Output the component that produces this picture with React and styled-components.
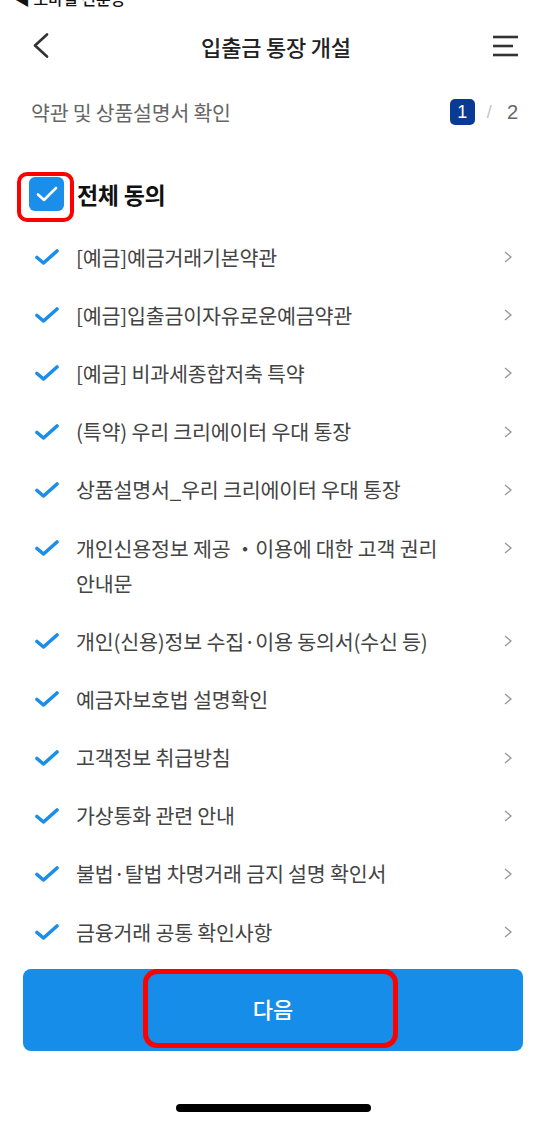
import styled, { createGlobalStyle } from "styled-components"

const GlobalStyle = createGlobalStyle`
  html, body {
    margin: 0;
    padding: 0;
    background: #ffffff;
  }
  body {
    font-family: "Noto Sans CJK KR", "Noto Sans", sans-serif;
    -webkit-font-smoothing: antialiased;
  }
  * { box-sizing: border-box; }
`

const Page = styled.div`
    width: 547px;
    min-height: 1125px;
    display: flex;
    flex-direction: column;
    background: #ffffff;
`

const StatusBar = styled.div`
    height: 7px;
    overflow: hidden;
    padding-left: 14px;
`

const StatusLabel = styled.div`
    margin-top: -11px;
    font-size: 16px;
    line-height: 18px;
    font-weight: 500;
    color: #111;
`

const Header = styled.header`
    height: 77px;
    display: grid;
    grid-template-columns: 1fr auto 1fr;
    align-items: center;
    padding: 0 28px 0 33px;
`

const Title = styled.h1`
    margin: 0;
    font-size: 22px;
    font-weight: 500;
    color: #222;
    letter-spacing: -0.2px;
`

const IconButton = styled.button`
    border: none;
    background: none;
    padding: 0;
    display: flex;
    justify-self: ${props => props.end ? "end" : "start"};
    cursor: pointer;
`

const StepRow = styled.div`
    height: 56px;
    display: flex;
    align-items: center;
    justify-content: space-between;
    padding: 0 29px 0 31px;
`

const StepTitle = styled.p`
    margin: 0;
    font-size: 20.5px;
    color: #666;
    letter-spacing: -0.2px;
`

const Steps = styled.div`
    display: flex;
    align-items: center;
    font-size: 19px;
    color: #666;
`

const StepBadge = styled.span`
    width: 25px;
    height: 26px;
    border-radius: 5px;
    background: #0b3a94;
    color: #fff;
    display: flex;
    align-items: center;
    justify-content: center;
    font-size: 18px;
    font-family: "Liberation Sans", "Noto Sans", sans-serif;
`

const Slash = styled.span`
    margin: 0 15px 0 12px;
    color: #c4c4c4;
    font-family: "Liberation Sans", "Noto Sans", sans-serif;
    font-size: 18px;
`

const StepTotal = styled.span`
    font-family: "Liberation Sans", "Noto Sans", sans-serif;
    font-size: 20px;
    color: #666;
`

const AllAgree = styled.label`
    margin-top: 37px;
    height: 34px;
    display: flex;
    align-items: center;
    gap: 13px;
    padding-left: 29px;
`

const CheckBox = styled.span`
    position: relative;
    width: 35px;
    height: 34px;
    border-radius: 6px;
    background: #1a8ee9;
    display: flex;
    align-items: center;
    justify-content: center;
`

const Highlight = styled.span`
    position: absolute;
    top: ${props => props.top}px;
    left: ${props => props.left}px;
    width: ${props => props.w}px;
    height: ${props => props.h}px;
    border: ${props => props.thick}px solid #ff0000;
    border-radius: ${props => props.radius}px;
    pointer-events: none;
`

const AllAgreeText = styled.span`
    font-size: 23px;
    font-weight: 700;
    color: #111;
    letter-spacing: -0.3px;
`

const List = styled.ul`
    list-style: none;
    margin: 17px 0 0;
    padding: 0;
`

const Item = styled.li`
    display: flex;
    align-items: flex-start;
    padding: 11.6px 35px 11.6px 35px;
`

const CheckCell = styled.span`
    width: 41px;
    height: 35px;
    display: flex;
    align-items: center;
    flex-shrink: 0;
`

const ItemText = styled.span`
    flex: 1;
    font-size: 20.6px;
    line-height: 35px;
    color: #444;
    letter-spacing: -0.2px;
`

const ArrowCell = styled.span`
    height: 35px;
    display: flex;
    align-items: center;
    flex-shrink: 0;
`

const Footer = styled.div`
    padding: 8px 24px 0 23px;
`

const NextButton = styled.button`
    position: relative;
    width: 100%;
    height: 82px;
    border: none;
    border-radius: 8px;
    background: #168de9;
    color: #fff;
    font-family: "Noto Sans CJK KR", "Noto Sans", sans-serif;
    font-size: 22px;
    font-weight: 500;
    padding: 0 0 4px;
    cursor: pointer;
`

const HomeArea = styled.div`
    flex: 1;
    display: flex;
    justify-content: center;
    padding-top: 53px;
`

const HomeBar = styled.span`
    width: 195px;
    height: 8px;
    border-radius: 4px;
    background: #000;
`

const items = [
    "[예금]예금거래기본약관",
    "[예금]입출금이자유로운예금약관",
    "[예금] 비과세종합저축 특약",
    "(특약) 우리 크리에이터 우대 통장",
    "상품설명서_우리 크리에이터 우대 통장",
    ["개인신용정보 제공 ・이용에 대한 고객 권리", "안내문"],
    "개인(신용)정보 수집·이용 동의서(수신 등)",
    "예금자보호법 설명확인",
    "고객정보 취급방침",
    "가상통화 관련 안내",
    "불법·탈법 차명거래 금지 설명 확인서",
    "금융거래 공통 확인사항",
]

const BackIcon = () => (
    <svg width="16" height="25" viewBox="0 0 16 25">
        <polyline points="14,1.5 2,12.5 14,23.5" fill="none" stroke="#333" strokeWidth="2.6" strokeLinecap="round" strokeLinejoin="round" />
    </svg>
)

const MenuIcon = () => (
    <svg width="27" height="22" viewBox="0 0 27 22">
        <line x1="1" y1="2" x2="26" y2="2" stroke="#333" strokeWidth="2.6" />
        <line x1="1" y1="11" x2="21" y2="11" stroke="#333" strokeWidth="2.6" />
        <line x1="1" y1="20" x2="26" y2="20" stroke="#333" strokeWidth="2.6" />
    </svg>
)

const Tick = () => (
    <svg width="24" height="16" viewBox="0 0 24 16">
        <path d="M2 8.5 L8.5 14 L22 2" fill="none" stroke="#1a8ee9" strokeWidth="3.6" strokeLinecap="round" strokeLinejoin="round" />
    </svg>
)

const WhiteTick = () => (
    <svg width="22" height="16" viewBox="0 0 22 16">
        <path d="M2 8.5 L8 14 L20 2" fill="none" stroke="#fff" strokeWidth="2.6" strokeLinecap="round" strokeLinejoin="round" />
    </svg>
)

const Arrow = () => (
    <svg width="8" height="12" viewBox="0 0 8 12">
        <polyline points="1,1 7,6 1,11" fill="none" stroke="#9a9a9a" strokeWidth="1.4" />
    </svg>
)

const App = () => {
    return (
        <Page>
            <GlobalStyle />
            <StatusBar>
                <StatusLabel>◀ 모바일 신분증</StatusLabel>
            </StatusBar>
            <Header>
                <IconButton><BackIcon /></IconButton>
                <Title>입출금 통장 개설</Title>
                <IconButton end><MenuIcon /></IconButton>
            </Header>
            <StepRow>
                <StepTitle>약관 및 상품설명서 확인</StepTitle>
                <Steps>
                    <StepBadge>1</StepBadge>
                    <Slash>/</Slash>
                    <StepTotal>2</StepTotal>
                </Steps>
            </StepRow>
            <AllAgree>
                <CheckBox>
                    <WhiteTick />
                    <Highlight top={-5} left={-12} w={57} h={50} thick={4.5} radius={10} />
                </CheckBox>
                <AllAgreeText>전체 동의</AllAgreeText>
            </AllAgree>
            <List>
                {items.map((t, i) => (
                    <Item key={i}>
                        <CheckCell><Tick /></CheckCell>
                        <ItemText>
                            {Array.isArray(t) ? <>{t[0]}<br />{t[1]}</> : t}
                        </ItemText>
                        <ArrowCell><Arrow /></ArrowCell>
                    </Item>
                ))}
            </List>
            <Footer>
                <NextButton>
                    다음
                    <Highlight top={0} left={120} w={255} h={79} thick={5} radius={14} />
                </NextButton>
            </Footer>
            <HomeArea>
                <HomeBar />
            </HomeArea>
        </Page>
    )
}

export default App
